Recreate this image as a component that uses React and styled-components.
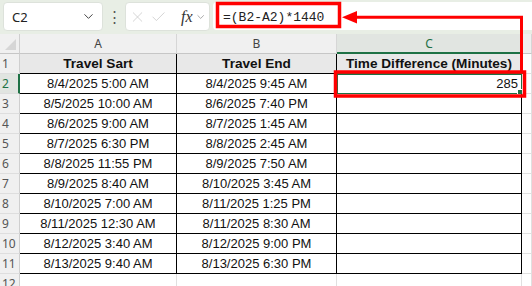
import styled, { createGlobalStyle } from "styled-components"
import { ChevronDown, X, Check } from "lucide-react"

const GlobalStyle = createGlobalStyle`
  html, body { margin: 0; padding: 0; background: #fff; }
  body { font-family: "Liberation Sans", Arial, sans-serif; }
`

const trips = [
  ["8/4/2025 5:00 AM", "8/4/2025 9:45 AM", "285"],
  ["8/5/2025 10:00 AM", "8/6/2025 7:40 PM", ""],
  ["8/6/2025 9:00 AM", "8/7/2025 1:45 AM", ""],
  ["8/7/2025 6:30 PM", "8/8/2025 2:45 AM", ""],
  ["8/8/2025 11:55 PM", "8/9/2025 7:50 AM", ""],
  ["8/9/2025 8:40 AM", "8/10/2025 3:45 AM", ""],
  ["8/10/2025 7:00 AM", "8/11/2025 1:25 PM", ""],
  ["8/11/2025 12:30 AM", "8/11/2025 8:30 AM", ""],
  ["8/12/2025 3:40 AM", "8/12/2025 9:00 PM", ""],
  ["8/13/2025 9:40 AM", "8/13/2025 6:30 PM", ""],
]

const GREEN = "#1e7145"

const App = () => {
  return (
    <Page>
      <GlobalStyle />
      <FormulaBar>
        <NameBox>
          <span>C2</span>
          <ChevronDown size={15} strokeWidth={1.6} color="#444" />
        </NameBox>
        <Dots>⋮</Dots>
        <FnBox>
          <X size={18} strokeWidth={1} color="#c4c4c4" />
          <Check size={18} strokeWidth={1} color="#c4c4c4" />
          <Fx>fx</Fx>
          <ChevronDown size={12} strokeWidth={1.5} color="#888" />
        </FnBox>
        <FormulaInput>=(B2-A2)*1440</FormulaInput>
      </FormulaBar>

      <Sheet>
        <Corner />
        <ColHead>A</ColHead>
        <ColHead>B</ColHead>
        <ColHead $active>C</ColHead>
        <ColHead />

        <RowHead>1</RowHead>
        <Cell $boxed $head>Travel Sart</Cell>
        <Cell $boxed $head>Travel End</Cell>
        <Cell $boxed $head>Time Difference (Minutes)</Cell>
        <Cell />

        {trips.map((row, i) => (
          <Row key={i} n={i + 2} row={row} />
        ))}

        <RowHead>12</RowHead>
        <Cell />
        <Cell />
        <Cell />
        <Cell />
      </Sheet>

      <Marks width="532" height="286" viewBox="0 0 532 286">
        <rect x="217.5" y="3.5" width="122" height="23" fill="none" stroke="#f00" strokeWidth="3.5" />
        <rect x="335.5" y="72" width="189" height="24" fill="none" stroke="#f00" strokeWidth="3.5" />
        <polyline points="354,17.2 521.5,17.2 521.5,71" fill="none" stroke="#f00" strokeWidth="3" />
        <polygon points="342,17.2 357,11 357,23.4" fill="#f00" />
      </Marks>
    </Page>
  )
}

const Row = ({ n, row }) => {
  const selected = n === 2
  return (
    <>
      <RowHead $active={selected}>{n}</RowHead>
      <Cell $boxed>{row[0]}</Cell>
      <Cell $boxed>{row[1]}</Cell>
      <Cell $boxed $right $selected={selected}>
        {row[2]}
        {selected && <Handle />}
      </Cell>
      <Cell />
    </>
  )
}

export default App

const Page = styled.div`
  position: relative;
  width: 532px;
  height: 286px;
  overflow: hidden;
  background: #fff;
`
const FormulaBar = styled.div`
  height: 34px;
  box-sizing: border-box;
  background: #e8eee5;
  display: flex;
  align-items: flex-start;
  padding: 2px 0 0 3px;
  font-family: "Noto Sans", "Liberation Sans", sans-serif;
`
const NameBox = styled.div`
  width: 100px;
  height: 29px;
  box-sizing: border-box;
  background: #fff;
  border: 1px solid #dde2db;
  border-radius: 4px;
  display: flex;
  align-items: center;
  justify-content: space-between;
  padding: 0 6px 0 8px;
  font-size: 13px;
  color: #222;
`
const Dots = styled.div`
  width: 22px;
  text-align: center;
  font-size: 15px;
  line-height: 29px;
  color: #555;
`
const FnBox = styled.div`
  width: 85px;
  height: 29px;
  box-sizing: border-box;
  background: #fff;
  border: 1px solid #dde2db;
  border-radius: 4px;
  display: flex;
  align-items: center;
  gap: 2px;
  padding: 0 3px 0 3px;
  svg:nth-child(2) { margin-left: 2px; }
`
const Fx = styled.span`
  font-family: "Liberation Serif", "DejaVu Serif", serif;
  font-style: italic;
  font-size: 16px;
  color: #333;
  margin-left: 12px;
`
const FormulaInput = styled.div`
  flex: 1;
  margin-left: 3px;
  height: 28px;
  background: #fff;
  border-radius: 4px 0 0 4px;
  display: flex;
  align-items: center;
  padding: 2px 0 0 10px;
  font-family: "Liberation Mono", "DejaVu Sans Mono", monospace;
  font-size: 13px;
  color: #222;
  box-sizing: border-box;
`
const Sheet = styled.div`
  display: grid;
  grid-template-columns: 20px 157px 160px 185px 1fr;
  grid-template-rows: 20px;
  grid-auto-rows: 20px;
  font-size: 13px;
  color: #111;
`
const Corner = styled.div`
  position: relative;
  background: #f0f0f0;
  border-right: 1px solid #cfcfcf;
  border-bottom: 1px solid #c6c6c6;
  &::after {
    content: "";
    position: absolute;
    right: 3px;
    bottom: 3px;
    width: 11px;
    height: 11px;
    background: #d6d6d6;
    clip-path: polygon(100% 0, 100% 100%, 0 100%);
  }
`
const ColHead = styled.div`
  background: ${p => (p.$active ? "#e1e5e1" : "#f0f0f0")};
  border-right: 1px solid #d6d6d6;
  border-bottom: ${p => (p.$active ? `2px solid ${GREEN}` : "1px solid #c6c6c6")};
  display: flex;
  align-items: center;
  justify-content: center;
  color: ${p => (p.$active ? GREEN : "#444")};
  font-family: "Noto Sans", "Liberation Sans", sans-serif;
  font-size: 12px;
`
const RowHead = styled.div`
  background: ${p => (p.$active ? "#e1e5e1" : "#f0f0f0")};
  border-right: ${p => (p.$active ? `2px solid ${GREEN}` : "1px solid #cfcfcf")};
  border-bottom: 1px solid #dedede;
  display: flex;
  align-items: center;
  padding-left: 2px;
  color: ${p => (p.$active ? GREEN : "#555")};
  font-family: "Noto Sans", "Liberation Sans", sans-serif;
  font-size: 12px;
`
const Cell = styled.div`
  position: relative;
  box-sizing: border-box;
  border-right: 1px solid ${p => (p.$boxed ? "#000" : "#e0e0e0")};
  border-bottom: 1px solid ${p => (p.$boxed ? "#000" : "#e0e0e0")};
  background: ${p => (p.$head ? "#e8e8e8" : "#fff")};
  font-weight: ${p => (p.$head ? 700 : 400)};
  font-size: ${p => (p.$head ? "13.6px" : "13px")};
  display: flex;
  align-items: center;
  justify-content: ${p => (p.$right ? "flex-end" : "center")};
  padding: 0 3px;
  white-space: nowrap;
  outline: ${p => (p.$selected ? `2px solid ${GREEN}` : "none")};
  outline-offset: -1px;
`
const Handle = styled.span`
  position: absolute;
  right: -3px;
  bottom: -3px;
  width: 5px;
  height: 5px;
  background: ${GREEN};
  border: 1px solid #fff;
`
const Marks = styled.svg`
  position: absolute;
  left: 0;
  top: 0;
  pointer-events: none;
`
